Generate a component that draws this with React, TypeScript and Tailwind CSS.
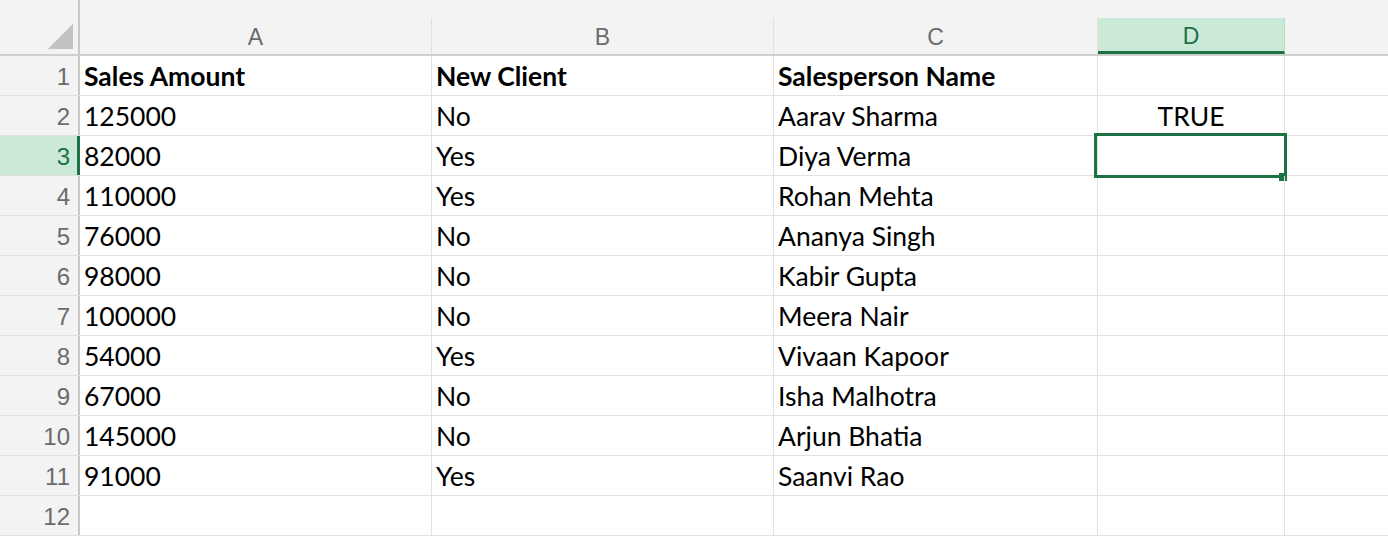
import React from "react";

const rows: [string, string, string][] = [
  ["Sales Amount", "New Client", "Salesperson Name"],
  ["125000", "No", "Aarav Sharma"],
  ["82000", "Yes", "Diya Verma"],
  ["110000", "Yes", "Rohan Mehta"],
  ["76000", "No", "Ananya Singh"],
  ["98000", "No", "Kabir Gupta"],
  ["100000", "No", "Meera Nair"],
  ["54000", "Yes", "Vivaan Kapoor"],
  ["67000", "No", "Isha Malhotra"],
  ["145000", "No", "Arjun Bhatia"],
  ["91000", "Yes", "Saanvi Rao"],
  ["", "", ""],
];

const cols = [
  { l: "A", w: "w-[352px]" },
  { l: "B", w: "w-[342px]" },
  { l: "C", w: "w-[324px]" },
  { l: "D", w: "w-[187px]" },
];

export default function App() {
  return (
    <div className="w-[1388px] h-[540px] overflow-hidden bg-white font-['Lato',sans-serif] text-[26.5px] text-black">
      {/* header */}
      <div className="flex h-[56px] bg-[#f3f3f3] border-b-2 border-[#cfcfcf]">
        <div className="w-[80px] shrink-0 h-full border-r-2 border-[#c8c8c8] relative">
          <svg className="absolute left-[48px] top-[24px]" width="25" height="25" viewBox="0 0 25 25">
            <polygon points="25,0 25,25 0,25" fill="#c2c2c2" />
          </svg>
        </div>
        {cols.map((c) => {
          const sel = c.l === "D";
          return (
            <div key={c.l} className={`${c.w} shrink-0 pt-[18px] h-full`}>
              <div
                className={`h-full border-r border-[#e0e0e0] flex items-center justify-center font-['Liberation_Sans',sans-serif] text-[23px] ${
                  sel
                    ? "bg-[#cae9d6] text-[#1e7145] border-b-[3px] border-b-[#1e7145] border-r-[#b5dcc4] pt-[3px]"
                    : "text-[#6b6b6b] pt-[2px]"
                }`}
              >
                {c.l}
              </div>
            </div>
          );
        })}
        <div className="flex-1" />
      </div>
      {/* body */}
      {rows.map((r, i) => {
        const n = i + 1;
        const selRow = n === 3;
        return (
          <div key={n} className="flex h-[40px] border-b border-[#e1e1e1]">
            <div
              className={`w-[80px] shrink-0 h-full flex items-center justify-end pt-[2px] font-['Liberation_Sans',sans-serif] text-[24px] ${
                selRow
                  ? "bg-[#cae9d6] text-[#1e7145] border-r-[3px] border-[#1e7145] pr-[7px]"
                  : "bg-[#f3f3f3] text-[#6b6b6b] border-r-2 border-[#c8c8c8] pr-[8px]"
              }`}
            >
              {n}
            </div>
            {r.map((t, j) => (
              <div
                key={j}
                className={`${cols[j].w} shrink-0 h-full border-r border-[#e1e1e1] flex items-center pl-[4px] pt-[3px] ${
                  n === 1 ? "font-bold" : ""
                }`}
              >
                {t}
              </div>
            ))}
            <div className={`${cols[3].w} shrink-0 h-full border-r border-[#e1e1e1] relative flex items-center justify-center pt-[3px]`}>
              {n === 2 ? "TRUE" : ""}
              {n === 3 && (
                <div className="absolute left-[-4px] top-[-3px] right-[-3px] bottom-[-3px] border-[3px] border-[#1e7145]">
                  <div className="absolute right-[-3px] bottom-[-6px] w-[8px] h-[8px] bg-[#1e7145]" />
                </div>
              )}
            </div>
            <div className="flex-1" />
          </div>
        );
      })}
    </div>
  );
}
